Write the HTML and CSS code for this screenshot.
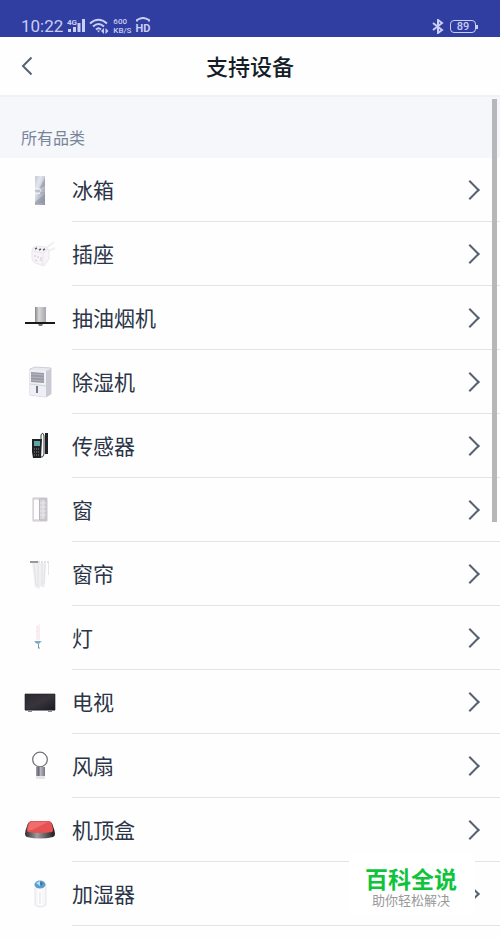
FILE: index.html
```html
<!DOCTYPE html>
<html lang="zh-CN">

<head>
    <meta charset="UTF-8" />
    <meta name="viewport" content="width=device-width, initial-scale=1" />
    <title>支持设备</title>

    <link rel="stylesheet" href="styles.css">
</head>

<body>

    <div class="status-bar">
        <div class="status-group">
            <span class="clock">10:22</span>
            <svg class="signal" width="18" height="16" viewBox="0 0 18 16">
                <text x="0" y="7" font-size="8" font-weight="bold">4G</text>
                <path d="M1 11h3v3H1zM6 9h3v5H6zM10.500 5h3v9h-3zM15 1h3v13h-3z" />
            </svg>
            <svg class="wifi" width="20" height="16" viewBox="0 0 20 16">
                <path class="line" d="M1 5.500Q9.500 -2 18 5.500M4 8.500Q9.500 3.500 15 8.500M7 11.500Q9.500 9 12 11.500" />
                <path d="M8 12.500h3L9.500 14.500zM15 10v6l-3-3zM16.500 10v6l3-3z" />
            </svg>
            <span class="speed"><span>600</span><span>KB/S</span></span>
            <span class="volte">
                <svg width="14" height="6" viewBox="0 0 14 6">
                    <path class="line" d="M1 4.500V3Q7 -1 13 3v1.500" />
                </svg>
                <span>HD</span>
            </span>
        </div>
        <div class="status-group">
            <svg width="12" height="15" viewBox="0 0 12 15">
                <path class="line" d="M1 4l9 7-4 3V1l4 3-9 7" />
            </svg>
            <span class="battery">89</span>
        </div>
    </div>

    <header class="title-bar">
        <button class="back" type="button" aria-label="返回">
            <svg width="12" height="20" viewBox="0 0 12 20">
                <path d="M10.500 1.500L2 10l8.500 8.500" />
            </svg>
        </button>
        <h1>支持设备</h1>
    </header>

    <main>
        <h2 class="section-title">所有品类</h2>
        <ul class="device-list">
            <li>
                <a class="device" href="#fridge">
                    <svg class="picture" viewBox="0 0 32 32">
                        <defs>
                            <linearGradient id="steel" x2="1" y2="1">
                                <stop offset="0" stop-color="#c5c9d5" />
                                <stop offset=".3" stop-color="#e3e6ee" />
                                <stop offset=".6" stop-color="#b9becb" />
                                <stop offset="1" stop-color="#8f94a5" />
                            </linearGradient>
                        </defs>
                        <path fill="url(#steel)" d="M11 2h10v29H11z" />
                        <path fill="#858b9f" d="M21 4v8l-6 3zM21 20v8l-10 3v-3z" opacity=".5" />
                        <path stroke="#f1f2f6" fill="none" d="M11 14l5 1v4l-5 1" />
                        <path stroke="#a0a5b5" d="M11 17h5M16 19h5" />
                    </svg>
                    <span class="name">冰箱</span>
                </a>
            </li>
            <li>
                <a class="device" href="#socket">
                    <svg class="picture" viewBox="0 0 32 32">
                        <path fill="none" stroke="#f1eff3" stroke-width="2" d="M22 10l8-6M24 13l7-3" />
                        <path fill="#f6f4f8" stroke="#ebe7ee" stroke-linejoin="round" d="M8 12q0-3 4-4l9 1q4 1 4 4v8l-5 7-9-3q-3-2-3-5z" />
                        <path fill="none" stroke="#e8e4eb" d="M9 13l10 2 5-4M19 15v12" />
                        <path stroke="#65606d" stroke-width="1.500" d="M11 11l2-1M15 12l2-1M19 12l2-1" />
                        <path stroke="#cdc8d2" d="M11 17v2M14 18v2M17 19v4M11 22l2 1" />
                    </svg>
                    <span class="name">插座</span>
                </a>
            </li>
            <li>
                <a class="device" href="#hood">
                    <svg class="picture" viewBox="0 0 32 32">
                        <defs>
                            <linearGradient id="duct">
                                <stop offset="0" stop-color="#858585" />
                                <stop offset=".35" stop-color="#d8d8da" />
                                <stop offset="1" stop-color="#a5a5aa" />
                            </linearGradient>
                        </defs>
                        <path fill="url(#duct)" d="M11 5h11v15H11z" />
                        <path fill="#19191c" d="M1 20h30v2H1z" />
                        <path fill="#77777c" d="M14 22h5l-1 2h-3z" />
                    </svg>
                    <span class="name">抽油烟机</span>
                </a>
            </li>
            <li>
                <a class="device" href="#dehumidifier">
                    <svg class="picture" viewBox="0 0 32 32">
                        <path fill="#e9eaf0" stroke="#c3c4cf" stroke-width=".8" d="M6 3l5-2 16 1v26l-5 3-16-2z" />
                        <path fill="#c9cad4" d="M22 5l5-2v25l-5 3z" />
                        <path fill="#eff0f5" d="M6 4l16 1v26L6 29z" />
                        <path fill="#989ba4" d="M7 6l13 1v10L7 16z" />
                        <path stroke="#b9bbc3" stroke-width=".8" d="M7 8l13 1M7 11l13 1M7 14l13 1" />
                        <path fill="#777b86" d="M12 20h2v7h-2z" />
                        <path fill="none" stroke="#d1d3dc" d="M6 18l16 2" />
                    </svg>
                    <span class="name">除湿机</span>
                </a>
            </li>
            <li>
                <a class="device" href="#sensor">
                    <svg class="picture" viewBox="0 0 32 32">
                        <path fill="#202226" d="M8 9h10l-1 19H9L8 22zM21 3h3v21h-3z" />
                        <path fill="#5aa7a5" d="M10 11h6v5h-6z" />
                        <path stroke="#8b8c90" d="M10 19h6M10 22h6M10 25h6" stroke-dasharray="1 1" />
                        <path fill="none" stroke="#3a3a40" d="M17 10V5q2-4 3 1v18q-1 4-3 3" />
                    </svg>
                    <span class="name">传感器</span>
                </a>
            </li>
            <li>
                <a class="device" href="#window">
                    <svg class="picture" viewBox="0 0 32 32">
                        <path fill="#e5e3e6" stroke="#c8c5ca" d="M9 4h14v23H9z" />
                        <path fill="#fdfdfd" d="M10 6h5v19h-5z" />
                        <path fill="#d6d4d8" stroke="#b9b7bc" d="M15.500 5h6.500v21h-6.500z" />
                        <path stroke="#e8e6ea" d="M16 9h6M16 13h6M16 17h6M16 21h6M19 6v19" />
                    </svg>
                    <span class="name">窗</span>
                </a>
            </li>
            <li>
                <a class="device" href="#curtain">
                    <svg class="picture" viewBox="0 0 32 32">
                        <path fill="#f0eff1" d="M8 5h14l-1 24h-3l-1-2-2 4-4-2z" />
                        <path stroke="#e2e1e4" d="M10 6l2 22M14 5v24M18 5v24M21 6l-1 20" />
                        <path stroke="#99979c" stroke-width="2" d="M6 4h8" />
                        <path stroke="#c4c2c7" d="M14 4h11" stroke-dasharray="2 1" />
                        <path stroke="#e7e6e9" d="M24.500 5v12" />
                    </svg>
                    <span class="name">窗帘</span>
                </a>
            </li>
            <li>
                <a class="device" href="#light">
                    <svg class="picture" viewBox="0 0 32 32">
                        <path fill="#fceff1" d="M12 4l4-2v16h-4z" />
                        <path stroke="#f9e7ea" d="M12 5l4 2M12 9l4 1M13 13l3 1" />
                        <path fill="#8fbdd3" d="M10 19h8l-3 3h-2z" />
                        <path stroke="#7499ad" d="M11 20h5M14.500 22v4M14 26h2" />
                    </svg>
                    <span class="name">灯</span>
                </a>
            </li>
            <li>
                <a class="device" href="#tv">
                    <svg class="picture" viewBox="0 0 32 32">
                        <defs>
                            <linearGradient id="screen" x2="1" y2="1">
                                <stop offset="0" stop-color="#2b2931" />
                                <stop offset=".5" stop-color="#37343d" />
                                <stop offset="1" stop-color="#1d1b22" />
                            </linearGradient>
                        </defs>
                        <path fill="url(#screen)" stroke="#1d1b20" stroke-width=".6" d="M1 8h30v16H1z" />
                        <path stroke="#8b898f" d="M1 24.500h30M4 25.500h4M24 25.500h4" />
                    </svg>
                    <span class="name">电视</span>
                </a>
            </li>
            <li>
                <a class="device" href="#fan">
                    <svg class="picture" viewBox="0 0 32 32">
                        <defs>
                            <linearGradient id="fanBase">
                                <stop offset="0" stop-color="#a3a2ad" />
                                <stop offset=".3" stop-color="#686773" />
                                <stop offset=".5" stop-color="#b8b6c0" />
                                <stop offset="1" stop-color="#777682" />
                            </linearGradient>
                        </defs>
                        <circle cx="16" cy="9.500" r="7.300" fill="#fff" stroke="#77747d" stroke-width="1.300" />
                        <path fill="url(#fanBase)" d="M12 17h9v9h-9z" />
                        <path fill="#e6e4e9" d="M12 26h9v3h-9z" />
                    </svg>
                    <span class="name">风扇</span>
                </a>
            </li>
            <li>
                <a class="device" href="#tv-box">
                    <svg class="picture" viewBox="0 0 32 32">
                        <defs>
                            <linearGradient id="boxSide">
                                <stop offset="0" stop-color="#302b2e" />
                                <stop offset=".4" stop-color="#a29c9f" />
                                <stop offset="1" stop-color="#1c181b" />
                            </linearGradient>
                        </defs>
                        <path fill="url(#boxSide)" d="M6 8h20q2 0 3 4 4 10 0 11-13 3-26 0-4-1 0-11 1-4 3-4z" />
                        <path fill="#e75153" d="M7 7h18q2 0 3 4 2 6 0 7-12 2-24 0-2-1 0-7 1-4 3-4z" />
                        <path fill="#f58a88" d="M8 8h16L8 16H4q1-8 4-8z" opacity=".5" />
                    </svg>
                    <span class="name">机顶盒</span>
                </a>
            </li>
            <li>
                <a class="device" href="#humidifier">
                    <svg class="picture" viewBox="0 0 32 32">
                        <path fill="#f7f6f9" stroke="#e6e5ea" d="M11 7h11v20q-5 4-11 0z" />
                        <path fill="#fff" d="M14 11h4v16h-4z" />
                        <path stroke="#dddce1" d="M16 14v12" />
                        <ellipse cx="16" cy="6.500" rx="5.500" ry="4" fill="#5a9dcb" />
                        <path fill="#b7dff3" d="M12 5l4-2v5z" />
                        <path fill="#306d9c" d="M16 4l3 1-2 3z" />
                    </svg>
                    <span class="name">加湿器</span>
                </a>
            </li>
        </ul>
    </main>

    <div class="scroll-thumb"></div>

    <aside class="brand">
        <strong>百科全说</strong>
        <span>助你轻松解决</span>
    </aside>

</body>

</html>
```

FILE: styles.css
```css
:root {
    --status-blue: #303da1;
    --status-text: #c9cef3;
    --title: #151d29;
    --text: #2b3547;
    --muted: #77859a;
    --chevron: #596273;
    --line: #e3e4e8;
    --section-bg: #f5f7fb;
    --green: #0fc43c;
}

* {
    box-sizing: border-box;
}

body {
    position: relative;
    margin: 0;
    min-height: 100vh;
    font-family: 'Noto Sans CJK SC', sans-serif;
    background: #fefefe;
    color: var(--text);
}

.status-bar {
    display: flex;
    justify-content: space-between;
    align-items: flex-end;
    height: 37px;
    padding: 0 20px 2px 21px;
    background: var(--status-blue);
    color: var(--status-text);
    font-family: Roboto, sans-serif;
}

.status-bar svg {
    display: block;
    fill: currentColor;
}

.status-bar .line {
    fill: none;
    stroke: currentColor;
    stroke-width: 2;
}

.status-group {
    display: flex;
    align-items: center;
    gap: 4px;
    height: 18px;
}

.clock {
    font-size: 17px;
    line-height: 18px;
}

.speed,
.volte {
    display: flex;
    flex-direction: column;
}

.speed {
    font-size: 8px;
    line-height: 9px;
    font-weight: 500;
}

.volte {
    align-items: center;
    font-size: 11px;
    line-height: 12px;
    font-weight: bold;
}

.battery {
    position: relative;
    width: 26px;
    margin: 0 4px 0 2px;
    border: 1px solid currentColor;
    border-radius: 4px;
    font-size: 11px;
    line-height: 11px;
    font-weight: 500;
    text-align: center;
}

.battery::after {
    content: '';
    position: absolute;
    top: 4px;
    right: -3px;
    width: 2px;
    height: 4px;
    background: currentColor;
}

.title-bar {
    display: grid;
    grid-template-columns: 50px 1fr 50px;
    align-items: center;
    height: 60px;
    border-bottom: 2px solid #eff1f5;
}

.title-bar h1 {
    margin: 0;
    padding-bottom: 2px;
    color: var(--title);
    font-size: 22px;
    line-height: 32px;
    font-weight: 500;
    text-align: center;
}

.back {
    padding: 0 0 0 21px;
    border: 0;
    background: none;
    text-align: left;
}

.back svg {
    display: block;
    fill: none;
    stroke: var(--chevron);
    stroke-width: 2;
}

.section-title {
    margin: 0;
    padding: 28px 21px 9px;
    background: var(--section-bg);
    color: var(--muted);
    font-size: 16px;
    line-height: 24px;
    font-weight: normal;
}

.device-list {
    margin: 0;
    padding: 0;
    list-style: none;
}

.device {
    display: flex;
    align-items: center;
    gap: 16px;
    padding-left: 24px;
    color: inherit;
    text-decoration: none;
}

.picture {
    width: 32px;
    height: 32px;
}

.name {
    display: flex;
    flex: 1;
    justify-content: space-between;
    align-items: center;
    height: 64px;
    padding: 0 23px 2px 0;
    border-bottom: 1px solid var(--line);
    font-size: 21px;
    line-height: 32px;
}

.name::after {
    content: '';
    width: 12px;
    height: 12px;
    margin-top: 2px;
    border: solid var(--chevron);
    border-width: 2px 2px 0 0;
    transform: rotate(45deg);
}

.scroll-thumb {
    position: absolute;
    top: 99px;
    right: 3px;
    width: 5px;
    height: 423px;
    background: #b7b7b9;
}

.brand {
    position: fixed;
    right: 25px;
    bottom: 24px;
    display: flex;
    flex-direction: column;
    align-items: center;
    padding: 14px 18px 6px 16px;
    background: #fff;
    font-family: 'Liberation Sans', 'Noto Sans CJK SC', sans-serif;
}

.brand strong {
    color: var(--green);
    font-size: 23px;
    line-height: 26px;
}

.brand span {
    color: #999;
    font-size: 13px;
    line-height: 16px;
}
```
